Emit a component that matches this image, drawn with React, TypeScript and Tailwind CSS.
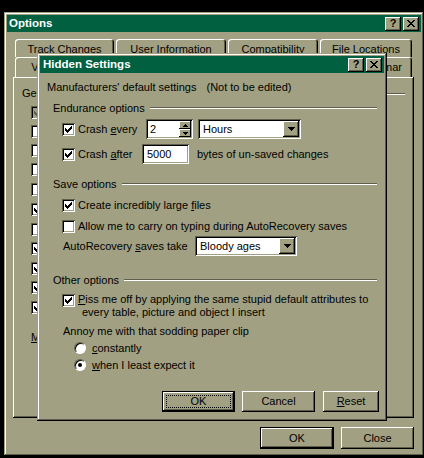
import React from 'react';

// pixel patterns for the little Win98 glyphs
const CHECK = ['......X', '.....XX', 'X...XXX', 'XX.XXX.', 'XXXXX..', '.XXX...', '..X....'];
const CLOSE_X = ['XX....XX', '.XX..XX.', '..XXXX..', '...XX...', '..XXXX..', '.XX..XX.', 'XX....XX'];
const DOWN = ['XXXXXXX', '.XXXXX.', '..XXX..', '...X...'];
const SPIN_UP = ['..X..', '.XXX.', 'XXXXX'];
const SPIN_DOWN = ['XXXXX', '.XXX.', '..X..'];

function Pixels({ rows, color = '#000' }: { rows: string[]; color?: string }) {
  const w = rows[0].length;
  const h = rows.length;
  return (
    <svg width={w} height={h} viewBox={`0 0 ${w} ${h}`} shapeRendering="crispEdges" className="block">
      {rows.flatMap((r, y) =>
        r.split('').map((c, x) =>
          c === 'X' ? <rect key={`${x}-${y}`} x={x} y={y} width={1} height={1} fill={color} /> : null
        )
      )}
    </svg>
  );
}

function TitleButtons() {
  return (
    <div className="ml-auto flex gap-[2px]">
      <div className="w-4 h-[14px] bg-[#a1a083] shadow-[inset_-1px_-1px_0_#000,inset_1px_1px_0_#fff,inset_-2px_-2px_0_#5f5e4a] flex items-center justify-center text-[11px] font-bold leading-none text-black pb-[1px]">
        ?
      </div>
      <div className="w-4 h-[14px] bg-[#a1a083] shadow-[inset_-1px_-1px_0_#000,inset_1px_1px_0_#fff,inset_-2px_-2px_0_#5f5e4a] flex items-center justify-center pb-[1px]">
        <Pixels rows={CLOSE_X} />
      </div>
    </div>
  );
}

function Checkbox({ checked, disabled }: { checked?: boolean; disabled?: boolean }) {
  return (
    <div
      className={`w-[13px] h-[13px] shrink-0 flex items-center justify-center shadow-[inset_1px_1px_0_#5f5e4a,inset_-1px_-1px_0_#fff,inset_2px_2px_0_#000,inset_-2px_-2px_0_#a1a083] ${
        disabled ? 'bg-[#a1a083]' : 'bg-white'
      }`}
    >
      {checked && <Pixels rows={CHECK} color={disabled ? '#5f5e4a' : '#000'} />}
    </div>
  );
}

function Radio({ checked }: { checked?: boolean }) {
  return (
    <div className="w-3 h-3 shrink-0 rounded-full bg-white border border-t-[#5f5e4a] border-l-[#5f5e4a] border-b-white border-r-white shadow-[inset_1px_1px_0_#000] flex items-center justify-center">
      {checked && <div className="w-1 h-1 rounded-full bg-black" />}
    </div>
  );
}

function Etched({ className = '' }: { className?: string }) {
  return <div className={`flex-1 h-[2px] border-t border-t-[#5f5e4a] border-b border-b-white ${className}`} />;
}

function Button({ children, className = '', isDefault }: { children: React.ReactNode; className?: string; isDefault?: boolean }) {
  if (isDefault) {
    return (
      <div className={`border border-black ${className}`}>
        <div className="w-full h-full bg-[#a1a083] shadow-[inset_-1px_-1px_0_#000,inset_1px_1px_0_#fff,inset_-2px_-2px_0_#5f5e4a] flex items-center justify-center p-[3px]">
          {children}
        </div>
      </div>
    );
  }
  return (
    <div className={`bg-[#a1a083] shadow-[inset_-1px_-1px_0_#000,inset_1px_1px_0_#fff,inset_-2px_-2px_0_#5f5e4a] flex items-center justify-center ${className}`}>
      {children}
    </div>
  );
}

function Dropdown({ value, className = '' }: { value: string; className?: string }) {
  return (
    <div className={`h-5 bg-white p-[2px] shadow-[inset_1px_1px_0_#5f5e4a,inset_-1px_-1px_0_#fff,inset_2px_2px_0_#000,inset_-2px_-2px_0_#a1a083] flex ${className}`}>
      <div className="flex-1 flex items-center pl-[3px]">{value}</div>
      <div className="w-4 h-4 bg-[#a1a083] shadow-[inset_-1px_-1px_0_#000,inset_1px_1px_0_#fff,inset_-2px_-2px_0_#5f5e4a] flex items-center justify-center">
        <Pixels rows={DOWN} />
      </div>
    </div>
  );
}

const tabShadow = 'rounded-t-[3px] bg-[#a1a083] shadow-[inset_1px_1px_0_#fff,inset_-1px_0_0_#000,inset_-2px_0_0_#5f5e4a] flex justify-center whitespace-nowrap overflow-hidden';

// General tab checkboxes; their labels sit under the Hidden Settings dialog
const generalOptions = [
  { id: 1, checked: true, disabled: true, cls: 'mt-[6px]' },
  { id: 2, checked: false, cls: 'mt-[6px]' },
  { id: 3, checked: false, cls: 'mt-[6px]' },
  { id: 4, checked: false, cls: 'mt-[6px]' },
  { id: 5, checked: false, cls: 'mt-[7px]' },
  { id: 6, checked: true, cls: 'mt-[7px]' },
  { id: 7, checked: false, cls: 'mt-[7px]' },
  { id: 8, checked: true, cls: 'mt-[6px]' },
  { id: 9, checked: true, cls: 'mt-[7px]' },
  { id: 10, checked: true, cls: 'mt-[6px]' },
  { id: 11, checked: true, cls: 'mt-[7px]' },
];

function OptionsWindow() {
  return (
    <div className="absolute left-[4px] top-[12px] w-[420px] h-[444px] p-[3px] bg-[#a1a083] shadow-[inset_-1px_-1px_0_#000,inset_1px_1px_0_#a1a083,inset_-2px_-2px_0_#5f5e4a,inset_2px_2px_0_#fff] flex flex-col">
      {/* title */}
      <div className="h-[17px] bg-[#006040] flex items-center pl-[2px] pr-[2px]">
        <span className="text-white font-bold text-[11.5px]">Options</span>
        <TitleButtons />
      </div>

      {/* tab rows */}
      <div className="mt-[7px] ml-[8px] flex gap-[2px] h-[18px]">
        <div className={`w-[99px] pt-[4px] ${tabShadow}`}>Track Changes</div>
        <div className={`w-[110px] pt-[4px] ${tabShadow}`}>User Information</div>
        <div className={`w-[90px] pt-[4px] ${tabShadow}`}>Compatibility</div>
        <div className={`w-[92px] pt-[4px] ${tabShadow}`}>File Locations</div>
      </div>
      <div className="ml-[8px] flex gap-[2px] h-[20px]">
        <div className={`w-[56px] items-center ${tabShadow}`}>View</div>
        <div className={`w-[60px] ${tabShadow}`} />
        <div className={`w-[45px] ${tabShadow}`} />
        <div className={`w-[50px] ${tabShadow}`} />
        <div className={`w-[57px] ${tabShadow}`} />
        <div className={`w-[119px] items-center ${tabShadow}`}>Spelling &amp; Grammar</div>
      </div>

      {/* tab panel */}
      <div className="ml-[6px] mr-[7px] h-[341px] pl-[9px] pt-[10px] shadow-[inset_-1px_-1px_0_#000,inset_1px_1px_0_#fff,inset_-2px_-2px_0_#5f5e4a] flex flex-col">
        <div className="h-[13px] flex items-center">
          <span className="w-[26px] overflow-hidden whitespace-nowrap">General</span>
          <div className="flex-1" />
          <Etched className="max-w-[18px] mr-[9px]" />
        </div>
        <div className="pl-[9px] flex flex-col">
          {generalOptions.map(o => (
            <div key={o.id} className={`h-[13px] flex items-center ${o.cls}`}>
              <Checkbox checked={o.checked} disabled={o.disabled} />
            </div>
          ))}
          <div className="mt-[17px] h-[13px] flex items-center">
            <span><u>M</u></span>
          </div>
        </div>
      </div>

      {/* bottom buttons */}
      <div className="mt-[9px] pr-[7px] flex justify-end gap-[7px]">
        <Button isDefault className="w-[74px] h-[22px]">OK</Button>
        <Button className="w-[73px] h-[22px]">Close</Button>
      </div>
    </div>
  );
}

function HiddenSettings() {
  return (
    <div className="absolute left-[37px] top-[53px] w-[350px] h-[368px] p-[3px] bg-[#a1a083] shadow-[inset_-1px_-1px_0_#000,inset_1px_1px_0_#a1a083,inset_-2px_-2px_0_#5f5e4a,inset_2px_2px_0_#fff] flex flex-col">
      <div className="h-[17px] bg-[#006040] flex items-center pl-[3px] pr-[2px]">
        <span className="text-white font-bold text-[11.5px]">Hidden Settings</span>
        <TitleButtons />
      </div>

      <div className="mt-[8px] pl-[7px] h-[13px] flex items-center">
        <span>Manufacturers' default settings</span>
        <span className="ml-[10px]">(Not to be edited)</span>
      </div>

      {/* Endurance */}
      <div className="mt-[7px] pl-[13px] h-[14px] flex items-center">
        <span>Endurance options</span>
        <Etched className="ml-[5px] mr-[7px]" />
      </div>
      <div className="mt-[4px] pl-[22px] h-5 flex items-center">
        <Checkbox checked />
        <span className="ml-[3px] w-[68px]">Crash <u>e</u>very</span>
        <div className="w-[47px] h-5 bg-white p-[2px] shadow-[inset_1px_1px_0_#5f5e4a,inset_-1px_-1px_0_#fff,inset_2px_2px_0_#000,inset_-2px_-2px_0_#a1a083] flex">
          <div className="flex-1 flex items-center pl-[2px]">2</div>
          <div className="w-[12px] flex flex-col">
            <div className="h-2 bg-[#a1a083] shadow-[inset_-1px_-1px_0_#000,inset_1px_1px_0_#fff] flex items-center justify-center">
              <Pixels rows={SPIN_UP} />
            </div>
            <div className="h-2 bg-[#a1a083] shadow-[inset_-1px_-1px_0_#000,inset_1px_1px_0_#fff] flex items-center justify-center">
              <Pixels rows={SPIN_DOWN} />
            </div>
          </div>
        </div>
        <Dropdown value="Hours" className="ml-[5px] w-[103px]" />
      </div>
      <div className="mt-[5px] pl-[22px] h-5 flex items-center">
        <Checkbox checked />
        <span className="ml-[3px] w-[64px]">Crash <u>a</u>fter</span>
        <div className="w-[47px] h-5 bg-white pl-[5px] shadow-[inset_1px_1px_0_#5f5e4a,inset_-1px_-1px_0_#fff,inset_2px_2px_0_#000,inset_-2px_-2px_0_#a1a083] flex items-center">
          5000
        </div>
        <span className="ml-[8px]">bytes of un-saved changes</span>
      </div>

      {/* Save */}
      <div className="mt-[13px] pl-[13px] h-[14px] flex items-center">
        <span>Save options</span>
        <Etched className="ml-[5px] mr-[7px]" />
      </div>
      <div className="mt-[8px] pl-[22px] h-[13px] flex items-center gap-[3px]">
        <Checkbox checked />
        <span>Create incredibly large <u>f</u>iles</span>
      </div>
      <div className="mt-[8px] pl-[22px] h-[13px] flex items-center gap-[3px]">
        <Checkbox />
        <span>Allow me to carry on typing during AutoRecovery saves</span>
      </div>
      <div className="mt-[3px] pl-[23px] h-5 flex items-center">
        <span className="w-[132px]">AutoRecovery <u>s</u>aves take</span>
        <Dropdown value="Bloody ages" className="w-[102px]" />
      </div>

      {/* Other */}
      <div className="mt-[17px] pl-[13px] h-[14px] flex items-center">
        <span>Other options</span>
        <Etched className="ml-[5px] mr-[7px]" />
      </div>
      <div className="mt-[6px] pl-[22px] flex items-start gap-[3px]">
        <div className="mt-[1px]">
          <Checkbox checked />
        </div>
        <div className="flex flex-col">
          <span className="h-[13px] flex items-center"><u>P</u>iss me off by applying the same stupid default attributes to</span>
          <span className="h-[13px] flex items-center pl-[4px]">every table, picture and object I insert</span>
        </div>
      </div>
      <div className="mt-[5px] pl-[23px] h-[14px] flex items-center">Annoy me with that sodding paper clip</div>
      <div className="mt-[3px] pl-[34px] h-[14px] flex items-center gap-[6px]">
        <Radio />
        <span><u>c</u>onstantly</span>
      </div>
      <div className="mt-[3px] pl-[34px] h-[14px] flex items-center gap-[6px]">
        <Radio checked />
        <span><u>w</u>hen I least expect it</span>
      </div>

      <div className="mt-[19px] pr-[5px] flex justify-end">
        <Button isDefault className="w-[73px] h-[21px]">
          <div className="w-full h-full border border-dotted border-black flex items-center justify-center">OK</div>
        </Button>
        <Button className="ml-[7px] w-[73px] h-[21px]">Cancel</Button>
        <Button className="ml-[8px] w-[56px] h-[21px]"><span><u>R</u>eset</span></Button>
      </div>
    </div>
  );
}

export default function App() {
  return (
    <div className="relative w-[424px] h-[458px] bg-black overflow-hidden font-['Liberation_Sans',Arial,sans-serif] text-[11px] leading-[13px] text-black">
      <OptionsWindow />
      <HiddenSettings />
    </div>
  );
}
